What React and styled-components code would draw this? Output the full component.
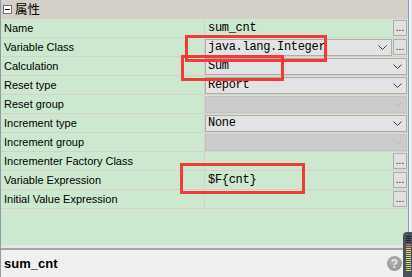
import styled, { createGlobalStyle } from "styled-components"

const GlobalStyle = createGlobalStyle`
  html, body {
    margin: 0;
    padding: 0;
    background: #eceef1;
  }
`

const rows = [
  { label: "Name", kind: "text", value: "sum_cnt", button: true },
  { label: "Variable Class", kind: "combo", value: "java.lang.Integer", button: true },
  { label: "Calculation", kind: "combo", value: "Sum" },
  { label: "Reset type", kind: "combo", value: "Report" },
  { label: "Reset group", kind: "combo", disabled: true },
  { label: "Increment type", kind: "combo", value: "None" },
  { label: "Increment group", kind: "combo", disabled: true },
  { label: "Incrementer Factory Class", kind: "text", value: "", button: true },
  { label: "Variable Expression", kind: "text", value: "$F{cnt}", button: true },
  { label: "Initial Value Expression", kind: "text", value: "", button: true },
]

const marks = [
  { left: 185, top: 35, width: 142, height: 27 },
  { left: 181, top: 55, width: 103, height: 26 },
  { left: 180, top: 163, width: 125, height: 31 },
]

const ticks = [
  "#1f2329", "#1f2329", "#1f2329", "#2a2f36", "#d9735c", "#e39a5c",
  "#e6c85a", "#e9d95e", "#d9de62", "#e9d95e", "#c9dc6a", "#e9d95e",
  "#b5d873", "#e9d95e", "#a9d47a", "#e6d35e", "#a9d47a", "#e6d35e",
]

function Chevron({ disabled }) {
  return (
    <svg width="9" height="5" viewBox="0 0 9 5">
      <polyline
        points="0.5,0.5 4.5,4.5 8.5,0.5"
        fill="none"
        stroke={disabled ? "#b9b9b9" : "#3c3c3c"}
        strokeWidth="1"
      />
    </svg>
  )
}

export default function App() {
  return (
    <Frame>
      <GlobalStyle />
      <Panel>
        <Header>
          <Toggle />
          <span>属性</span>
        </Header>
        <Grid>
          {rows.map((r) => (
            <Row key={r.label}>
              <Label>{r.label}</Label>
              <Value>
                {r.kind === "combo" ? (
                  <Combo disabled={r.disabled}>
                    <span>{r.value}</span>
                    <Chevron disabled={r.disabled} />
                  </Combo>
                ) : (
                  <PlainText>{r.value}</PlainText>
                )}
                {r.button && <Dots>...</Dots>}
              </Value>
            </Row>
          ))}
        </Grid>
        <Splitter />
        <Description>
          <strong>sum_cnt</strong>
          <Help>?</Help>
        </Description>
      </Panel>
      {marks.map((m, i) => (
        <Mark key={i} style={{ left: m.left, top: m.top, width: m.width, height: m.height }} />
      ))}
      <Meter>
        {ticks.map((c, i) => (
          <Tick key={i} color={c} />
        ))}
      </Meter>
    </Frame>
  )
}

const Frame = styled.div`
  position: relative;
  width: 412px;
  height: 277px;
  overflow: hidden;
  display: flex;
`

const Panel = styled.div`
  width: 407px;
  height: 277px;
  display: flex;
  flex-direction: column;
  border-left: 1px solid #8e9aab;
  border-right: 1px solid #7f9ec8;
  box-sizing: content-box;
`

const Header = styled.div`
  height: 18px;
  flex-shrink: 0;
  background: #d4d0c8;
  display: flex;
  align-items: center;
  padding-left: 2px;
  font-family: "Noto Sans CJK SC", sans-serif;
  font-size: 12.5px;
  color: #000;
  border-bottom: 1px solid #d6d0c5;

  span {
    margin-left: 3px;
    line-height: 12px;
  }
`

const Toggle = styled.div`
  width: 7px;
  height: 7px;
  border: 1px solid #6f6f6f;
  background: #ffffff;
  position: relative;

  &::after {
    content: "";
    position: absolute;
    left: 1px;
    right: 1px;
    top: 3px;
    height: 1px;
    background: #000;
  }
`

const Grid = styled.div`
  flex: 1;
  background: #cce8cf;
  display: flex;
  flex-direction: column;
`

const Row = styled.div`
  display: grid;
  grid-template-columns: 204px 1fr;
  height: 19px;
  box-sizing: border-box;
  border-bottom: 1px solid #d6d0c5;
`

const Label = styled.div`
  border-right: 1px solid #d6d0c5;
  padding-left: 3px;
  display: flex;
  align-items: center;
  font-family: "Liberation Sans", Arial, sans-serif;
  font-size: 11px;
  color: #000;
  white-space: nowrap;
`

const Value = styled.div`
  display: flex;
  align-items: center;
  gap: 1px;
  padding: 0 1px 0 0;
  min-width: 0;
`

const Combo = styled.div`
  flex: 1;
  height: 17px;
  box-sizing: border-box;
  border: 1px solid ${(p) => (p.disabled ? "#c3c3c3" : "#adadad")};
  background: ${(p) => (p.disabled ? "#cccccc" : "#e3e3e3")};
  display: flex;
  align-items: center;
  justify-content: space-between;
  padding: 0 4px 0 2px;
  font-family: "Liberation Mono", monospace;
  font-size: 12px;
  letter-spacing: -0.3px;
  color: #000;

  svg {
    flex-shrink: 0;
    margin-top: 1px;
  }
`

const PlainText = styled.div`
  flex: 1;
  padding-left: 3px;
  font-family: "Liberation Mono", monospace;
  font-size: 12px;
  letter-spacing: -0.3px;
  color: #000;
  white-space: nowrap;
`

const Dots = styled.div`
  width: 14px;
  height: 16px;
  box-sizing: border-box;
  border: 1px solid #adadad;
  background: #e1e1e1;
  display: flex;
  align-items: flex-end;
  justify-content: center;
  font-family: "Liberation Sans", Arial, sans-serif;
  font-size: 10px;
  line-height: 10px;
  padding-bottom: 2px;
  color: #000;
`

const Splitter = styled.div`
  height: 3px;
  flex-shrink: 0;
  background: #e6e6e6;
  border-bottom: 2px solid #a6a6a6;
`

const Description = styled.div`
  height: 27px;
  flex-shrink: 0;
  background: #f0f0f0;
  display: flex;
  align-items: center;
  justify-content: space-between;
  padding: 0 6px 0 3px;
  font-family: "Liberation Sans", Arial, sans-serif;
  font-size: 13px;
  color: #000;

  strong {
    font-weight: 700;
  }
`

const Help = styled.div`
  width: 15px;
  height: 15px;
  border-radius: 50%;
  background: radial-gradient(circle at 40% 35%, #b0b0b0, #8e8e8e);
  color: #e9e9e9;
  font-family: "Liberation Sans", Arial, sans-serif;
  font-weight: 700;
  font-size: 12px;
  display: flex;
  align-items: center;
  justify-content: center;
`

const Mark = styled.div`
  position: absolute;
  box-sizing: border-box;
  border: 3px solid #f23a3a;
  pointer-events: none;
`

const Meter = styled.div`
  position: absolute;
  left: 403px;
  top: 232px;
  width: 9px;
  height: 45px;
  box-sizing: border-box;
  background: #4a525e;
  border-radius: 4px 0 0 0;
  padding: 4px 1px 0 3px;
  display: flex;
  flex-direction: column;
  gap: 1px;
`

const Tick = styled.div`
  height: 1px;
  flex-shrink: 0;
  background: ${(p) => p.color};
`
